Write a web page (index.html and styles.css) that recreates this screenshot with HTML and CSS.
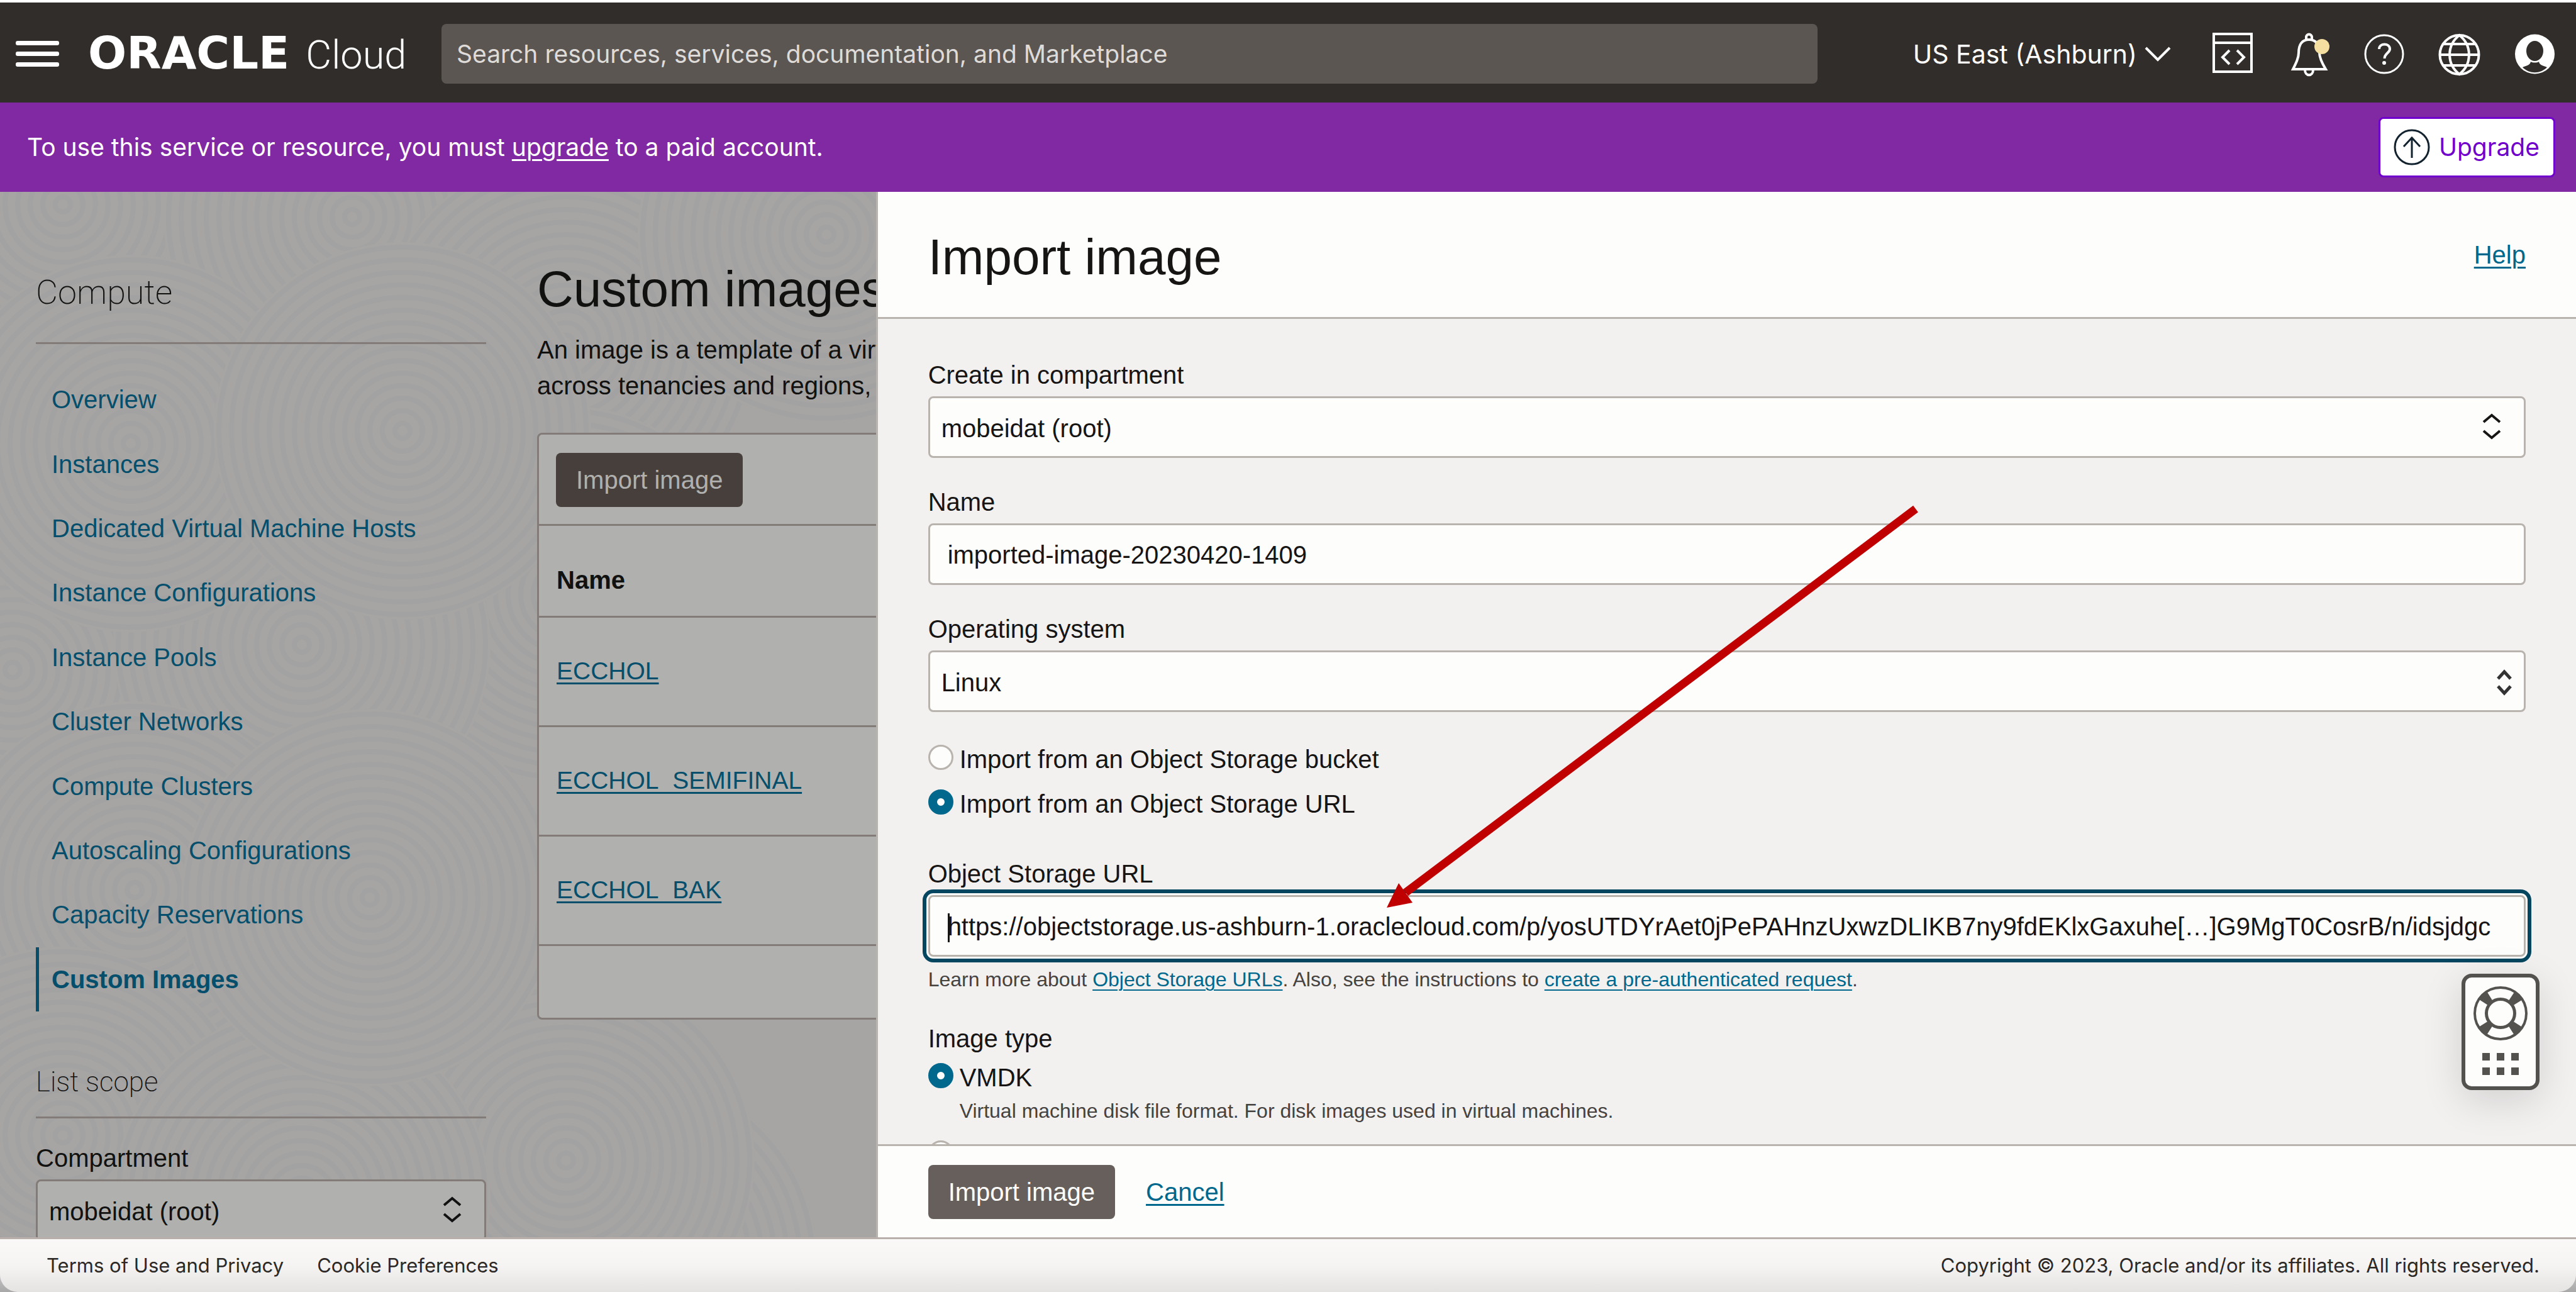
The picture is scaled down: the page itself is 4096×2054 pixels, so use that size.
FILE: index.html
```html
<!DOCTYPE html>
<html lang="en">
<head>
<meta charset="utf-8">
<title>Custom images - Oracle Cloud</title>
<link rel="stylesheet" href="styles.css">
</head>
<body>
<header class="topbar">
  <div class="brand">
    <button class="icon-button menu" aria-label="Navigation menu"><span></span><span></span><span></span></button>
    <a class="logo" href="#"><span class="logo-oracle">ORACLE</span><span class="logo-cloud">Cloud</span></a>
  </div>
  <input class="search" type="search" aria-label="Search" placeholder="Search resources, services, documentation, and Marketplace">
  <nav class="tools">
    <button class="icon-button region">US East (Ashburn)
      <svg class="region-chevron" width="42" height="26" viewBox="0 0 42 26" fill="none" stroke="#fff" stroke-width="4"><path d="M2 3L21 22L40 3"/></svg>
    </button>
    <button class="icon-button" aria-label="Developer tools">
      <svg width="72" height="72" viewBox="0 0 72 72" fill="none" stroke="#fff" stroke-width="4"><path d="M6 4H66V64H6ZM6 18H66M31 30L20 41L31 52M43 30L54 41L43 52"/></svg>
    </button>
    <button class="icon-button" aria-label="Announcements">
      <svg width="72" height="72" viewBox="0 0 72 72" fill="none" stroke="#fff" stroke-width="4"><path d="M33 13V9A4 4 0 0 1 42 9V13M12 60H64C58 50 54 42 54 34C54 20 48 13 37.500 13C27 13 21 20 21 34C21 42 17 50 12 60ZM31 61C31 72 44 72 44 61"/><circle cx="58" cy="24" r="12" fill="#f5dfa0" stroke="none"/></svg>
    </button>
    <button class="icon-button" aria-label="Help menu">
      <svg width="72" height="72" viewBox="0 0 72 72" fill="none" stroke="#fff" stroke-width="3"><circle cx="37" cy="36" r="30"/><path stroke-width="4" d="M29 28C29 18 46 18 46 28C46 34 37.500 35 37.500 43"/><circle cx="37" cy="50" r="3" fill="#fff" stroke="none"/></svg>
    </button>
    <button class="icon-button" aria-label="Language">
      <svg width="72" height="72" viewBox="0 0 72 72" fill="none" stroke="#fff" stroke-width="4"><circle cx="36.500" cy="37" r="31"/><path d="M36.500 6C16 22 16 52 36.500 68C57 52 57 22 36.500 6ZM11 20H62M6 37H67M11 54H62"/></svg>
    </button>
    <button class="icon-button" aria-label="Profile">
      <svg width="72" height="72" viewBox="0 0 72 72"><circle cx="36.500" cy="36" r="31.500" fill="#fff"/><ellipse cx="36.500" cy="31" rx="13.500" ry="16" fill="#312d2a"/><path fill="#312d2a" d="M30 48C33 50 40 50 43 48C44 54 50 54 56 57C45 68 28 68 17 57C23 54 29 54 30 48Z"/></svg>
    </button>
  </nav>
</header>

<section class="banner">
  <p class="banner-text">To use this service or resource, you must <a class="banner-link" href="#">upgrade</a> to a paid account.</p>
  <button class="upgrade">
    <svg width="58" height="58" viewBox="0 0 58 58" fill="none" stroke="#12222e" stroke-width="3"><circle cx="29" cy="29" r="27"/><path d="M29 46V14M16 28L29 14L42 28"/></svg>
    Upgrade
  </button>
</section>

<div class="workspace">
  <div class="page">
    <svg class="texture" width="100%" height="100%" aria-hidden="true">
      <defs>
        <g id="rings">
          <circle r="300" fill="#a6a5a3"/>
          <g fill="none" stroke="#a3a2a2" stroke-width="8">
            <circle r="12"/><circle r="32"/><circle r="52"/><circle r="72"/><circle r="92"/><circle r="112"/><circle r="132"/><circle r="152"/><circle r="172"/><circle r="192"/><circle r="212"/><circle r="232"/><circle r="252"/><circle r="272"/><circle r="292"/>
          </g>
        </g>
      </defs>
      <use href="#rings" x="1000" y="1700"/>
      <use href="#rings" x="100" y="20"/>
      <use href="#rings" x="560" y="40"/>
      <use href="#rings" x="900" y="240"/>
      <use href="#rings" x="1314" y="68"/>
      <use href="#rings" x="20" y="760"/>
      <use href="#rings" x="900" y="640"/>
      <use href="#rings" x="480" y="720"/>
      <use href="#rings" x="208" y="400"/>
      <use href="#rings" x="640" y="380"/>
      <use href="#rings" x="214" y="1110"/>
      <use href="#rings" x="900" y="1540"/>
      <use href="#rings" x="100" y="1500"/>
      <use href="#rings" x="480" y="1600"/>
      <use href="#rings" x="588" y="1122"/>
    </svg>
    <aside class="sidebar">
      <h2 class="side-title">Compute</h2>
      <nav class="side-nav">
        <a href="#">Overview</a>
        <a href="#">Instances</a>
        <a href="#">Dedicated Virtual Machine Hosts</a>
        <a href="#">Instance Configurations</a>
        <a href="#">Instance Pools</a>
        <a href="#">Cluster Networks</a>
        <a href="#">Compute Clusters</a>
        <a href="#">Autoscaling Configurations</a>
        <a href="#">Capacity Reservations</a>
        <a href="#" class="current" aria-current="page">Custom Images</a>
      </nav>
      <h3 class="scope-title">List scope</h3>
      <div class="field">
        <label for="scope">Compartment</label>
        <div class="select">
          <select id="scope"><option>mobeidat (root)</option></select>
          <svg class="updown" width="30" height="42" viewBox="0 0 30 42" fill="none" stroke="#111" stroke-width="4"><path d="M2 14L15 3L28 14M2 28L15 39L28 28"/></svg>
        </div>
      </div>
    </aside>
    <main class="content">
      <h1 class="page-title">Custom images</h1>
      <p class="intro">An image is a template of a virtual<br>across tenancies and regions,</p>
      <div class="card">
        <div class="card-tools"><button class="primary dimmed">Import image</button></div>
        <table class="images">
          <thead><tr><th scope="col">Name</th></tr></thead>
          <tbody>
            <tr><td><a href="#">ECCHOL</a></td></tr>
            <tr><td><a href="#">ECCHOL_SEMIFINAL</a></td></tr>
            <tr><td><a href="#">ECCHOL_BAK</a></td></tr>
          </tbody>
        </table>
      </div>
    </main>
  </div>

  <section class="panel" aria-label="Import image">
    <header class="panel-head">
      <h2 class="panel-title">Import image</h2>
      <a class="link" href="#">Help</a>
    </header>
    <form class="panel-body">
      <div class="field">
        <label for="compartment">Create in compartment</label>
        <div class="select">
          <select id="compartment"><option>mobeidat (root)</option></select>
          <svg class="updown" width="30" height="42" viewBox="0 0 30 42" fill="none" stroke="#161513" stroke-width="4"><path d="M2 14L15 3L28 14M2 28L15 39L28 28"/></svg>
        </div>
      </div>
      <div class="field">
        <label for="name">Name</label>
        <input class="text" id="name" type="text" value="imported-image-20230420-1409">
      </div>
      <div class="field">
        <label for="os">Operating system</label>
        <div class="select">
          <select id="os"><option>Linux</option></select>
          <svg class="updown native" width="26" height="42" viewBox="0 0 26 42" fill="none" stroke="#333" stroke-width="5"><path d="M3 15L13 4L23 15M3 27L13 38L23 27"/></svg>
        </div>
      </div>
      <div class="sources">
        <label class="radio"><input type="radio" name="source"><span>Import from an Object Storage bucket</span></label>
        <label class="radio"><input type="radio" name="source" checked><span>Import from an Object Storage URL</span></label>
      </div>
      <div class="field">
        <label for="url">Object Storage URL</label>
        <div class="url-box">
          <input class="text focused" id="url" type="text" value="https://objectstorage.us-ashburn-1.oraclecloud.com/p/yosUTDYrAet0jPePAHnzUxwzDLIKB7ny9fdEKlxGaxuhe[…]G9MgT0CosrB/n/idsjdgc">
          <span class="caret"></span>
        </div>
        <p class="hint after-input">Learn more about <a class="link" href="#">Object Storage URLs</a>. Also, see the instructions to <a class="link" href="#">create a pre-authenticated request</a>.</p>
      </div>
      <fieldset class="types">
        <legend>Image type</legend>
        <label class="radio"><input type="radio" name="type" checked><span>VMDK</span></label>
        <p class="hint indented">Virtual machine disk file format. For disk images used in virtual machines.</p>
        <label class="radio next"><input type="radio" name="type"><span>QCOW2</span></label>
      </fieldset>
    </form>
    <footer class="panel-foot">
      <button class="primary">Import image</button>
      <a class="link" href="#">Cancel</a>
    </footer>
  </section>
</div>

<footer class="footer">
  <div class="footer-inner">
    <a href="#">Terms of Use and Privacy</a>
    <a href="#">Cookie Preferences</a>
    <span class="copyright">Copyright © 2023, Oracle and/or its affiliates. All rights reserved.</span>
  </div>
</footer>

<svg class="arrow" width="860" height="660" viewBox="0 0 860 660" aria-hidden="true"><path d="M851 16L40 626" stroke="#c00000" stroke-width="13"/><path d="M10 650L29 611L51 642Z" fill="#c00000"/></svg>

<button class="assist" aria-label="Support">
  <svg width="86" height="86" viewBox="0 0 86 86" fill="none" stroke="#54524e">
    <circle cx="43" cy="43" r="32" stroke-width="19" stroke-dasharray="14 36.270" stroke-dashoffset="-18.130"/>
    <circle cx="43" cy="43" r="41" stroke-width="4"/><circle cx="43" cy="43" r="22.500" stroke-width="5"/>
  </svg>
  <svg width="58" height="36" viewBox="0 0 58 36" fill="#54524e"><path d="M0 0h12v12H0zM23 0h12v12H23zM46 0h12v12H46zM0 23h12v12H0zM23 23h12v12H23zM46 23h12v12H46z"/></svg>
</button>
</body>
</html>
```
FILE: styles.css
```css
* { box-sizing: border-box; }

body {
  margin: 0;
  height: 100vh;
  display: flex;
  flex-direction: column;
  position: relative;
  overflow: hidden;
  font: 40px/52px "Liberation Sans", Arial, sans-serif;
  color: #161513;
  background: #b4b3b2;
}

h1, h2, h3, p { margin: 0; font-weight: 400; }
button, input, select { font: inherit; color: inherit; margin: 0; }
a { color: inherit; text-decoration: none; }
.link { color: #00688c; text-decoration: underline; text-decoration-thickness: 3px; text-underline-offset: 5px; }

/* Top bar */
.topbar {
  display: flex;
  align-items: center;
  height: 163px;
  padding: 4px 30px 0 25px;
  border-top: 4px solid #fff;
  background: #312d2a;
  font-family: Inter, sans-serif;
}
.icon-button { display: flex; align-items: center; padding: 0; border: 0; background: none; }
.brand { display: flex; align-items: center; gap: 46px; width: 677px; }
.menu { flex-direction: column; gap: 10px; width: 69px; }
.menu span { width: 69px; height: 7px; border-radius: 3px; background: #fff; }
.logo { display: flex; align-items: baseline; gap: 26px; color: #fff; line-height: 64px; }
.logo-oracle { font-family: "DejaVu Sans", sans-serif; font-weight: 700; font-size: 72px; }
.logo-cloud { font-family: Roboto, sans-serif; font-weight: 300; font-size: 63px; }
.search {
  flex: 1;
  height: 95px;
  padding: 0 24px;
  border: 0;
  border-radius: 8px;
  background: #5b5652;
  font-size: 39px;
}
.search::placeholder { color: #dedbd8; opacity: 1; }
.tools { display: flex; align-items: center; gap: 48px; margin-left: 152px; }
.region { gap: 12px; margin-right: 14px; color: #fff; font-size: 41px; }

/* Upgrade banner */
.banner {
  display: flex;
  align-items: center;
  justify-content: space-between;
  height: 142px;
  padding: 0 33px 0 43px;
  background: #8029a3;
  color: #fff;
  font-family: Inter, sans-serif;
  font-size: 39px;
}
.banner-link { text-decoration: underline; text-decoration-thickness: 3px; text-underline-offset: 5px; }
.upgrade {
  display: flex;
  align-items: center;
  gap: 14px;
  height: 96px;
  padding: 0 22px 0 21px;
  border: 3px solid #7000cc;
  border-radius: 8px;
  background: #fff;
  color: #7000cc;
}

/* Page behind the panel */
.workspace { flex: 1; min-height: 0; display: grid; grid-template-columns: 34% 66%; grid-template-rows: 100%; }
.page {
  position: relative;
  display: flex;
  gap: 81px;
  padding-left: 57px;
  overflow: hidden;
  background: #a6a5a3;
  color: #111110;
}
.texture { position: absolute; top: 0; left: 0; }
.sidebar { position: relative; flex: 0 0 716px; }
.side-title {
  height: 242px;
  padding-top: 126px;
  border-bottom: 3px solid #837b78;
  font: 200 54px/68px Roboto, sans-serif;
}
.side-nav { display: grid; grid-auto-rows: 1fr; height: 1024px; margin-top: 37px; color: #054f6c; }
.side-nav a { display: flex; align-items: center; padding-left: 25px; }
.side-nav .current { padding-left: 20px; border-left: 5px solid #054f6c; font-weight: 700; }
.scope-title {
  height: 88px;
  margin: 82px 0 37px;
  border-bottom: 3px solid #837b78;
  font: 200 44px/60px Roboto, sans-serif;
}
.content { position: relative; flex: 1; min-width: 0; white-space: nowrap; }
.page-title { padding-top: 107px; font-size: 80px; line-height: 96px; }
.intro { margin-top: 20px; line-height: 57px; }
.card {
  width: 200%;
  margin-top: 46px;
  border: 3px solid #837b78;
  border-radius: 8px;
  background: #b0b0ae;
}
.card-tools { height: 145px; padding: 29px 27px; border-bottom: 3px solid #837b78; }
.images { width: 100%; margin-bottom: 114px; border-collapse: collapse; }
.images th { height: 144px; padding: 30px 28px 0; border-bottom: 3px solid #837b78; text-align: left; }
.images td { height: 174px; padding: 0 28px; border-bottom: 3px solid #837b78; font-size: 39px; }
.images a { color: #054f6c; text-decoration: underline; text-decoration-thickness: 3px; text-underline-offset: 5px; }

.primary {
  height: 86px;
  padding: 0 32px;
  border: 0;
  border-radius: 8px;
  background: #665f5b;
  color: #fdfdfc;
}
.dimmed { background: #473f3c; color: #b0b0ae; }

/* Import panel */
.panel { display: flex; flex-direction: column; min-height: 0; border-left: 3px solid #b9b3ae; background: #fdfdfc; }
.panel-head {
  display: flex;
  align-items: center;
  justify-content: space-between;
  flex: 0 0 202px;
  padding: 0 80px;
  border-bottom: 3px solid #b9b3ae;
}
.panel-title { padding-top: 8px; font-size: 80px; line-height: 96px; }
.panel-body { flex: 1; min-height: 0; overflow: hidden; padding: 63px 80px 0; background: #f3f1f0; }
.panel-foot {
  display: flex;
  align-items: center;
  gap: 49px;
  flex: 0 0 148px;
  padding: 0 80px;
  border-top: 3px solid #b9b3ae;
}

.field { display: flex; flex-direction: column; gap: 8px; margin-bottom: 44px; }
.select { position: relative; }
.select select, .text {
  display: block;
  width: 100%;
  height: 98px;
  padding: 3px 18px 0;
  border: 3px solid #b9b3ae;
  border-radius: 8px;
  background: #fdfdfc;
  appearance: none;
  outline: 0;
}
.text { padding: 2px 28px 0; }
.page .select select { border-color: #837b78; background: #b0b0ae; }
.updown { position: absolute; top: 27px; right: 39px; pointer-events: none; }
.native { top: 30px; right: 21px; }
.url-box { position: relative; }
.focused { box-shadow: 0 0 0 3px #fdfdfc, 0 0 0 9px #04465f; }
.caret { position: absolute; top: 29px; left: 31px; width: 3px; height: 46px; background: #161513; }

.sources { display: flex; flex-direction: column; gap: 10px; margin-bottom: 55px; }
.radio { display: flex; align-items: center; gap: 10px; height: 61px; }
.radio input {
  appearance: none;
  width: 40px;
  height: 40px;
  margin-bottom: 6px;
  border: 3px solid #b9b3ae;
  border-radius: 50%;
  background: #fdfdfc;
}
.radio input:checked { border: 14px solid #00688c; }
.hint { font-size: 32px; line-height: 44px; color: #45423f; }
.hint .link { text-decoration-thickness: 2px; }
.after-input { margin-top: 6px; }
.types { margin: 46px 0 0; padding: 0; border: 0; }
.types legend { padding: 0 0 3px; }
.types .radio { height: 66px; }
.types .hint { line-height: 40px; }
.indented { padding-left: 50px; }
.types .next { margin-top: 17px; }

/* Footer */
.footer { flex: 0 0 87px; border-top: 3px solid #b9b0ab; background: linear-gradient(#faf9f8, #a9a8a8); }
.footer-inner {
  display: flex;
  align-items: center;
  gap: 53px;
  height: 84px;
  padding: 0 58px 0 74px;
  border-radius: 0 0 28px 28px;
  background: linear-gradient(#faf9f8, #f5f4f3 50%, #e5e3e2);
  font: 31px/40px Inter, sans-serif;
  color: #2b2826;
}
.copyright { margin-left: auto; }

/* Overlays */
.arrow { position: absolute; left: 2195px; top: 793px; pointer-events: none; }
.assist {
  position: absolute;
  right: 58px;
  bottom: 321px;
  display: flex;
  flex-direction: column;
  align-items: center;
  gap: 20px;
  width: 124px;
  height: 185px;
  padding: 14px 0 0;
  border: 6px solid #54524e;
  border-radius: 16px;
  background: #fdfdfc;
  box-shadow: 0 16px 64px rgba(0, 0, 0, 0.14);
}
```
